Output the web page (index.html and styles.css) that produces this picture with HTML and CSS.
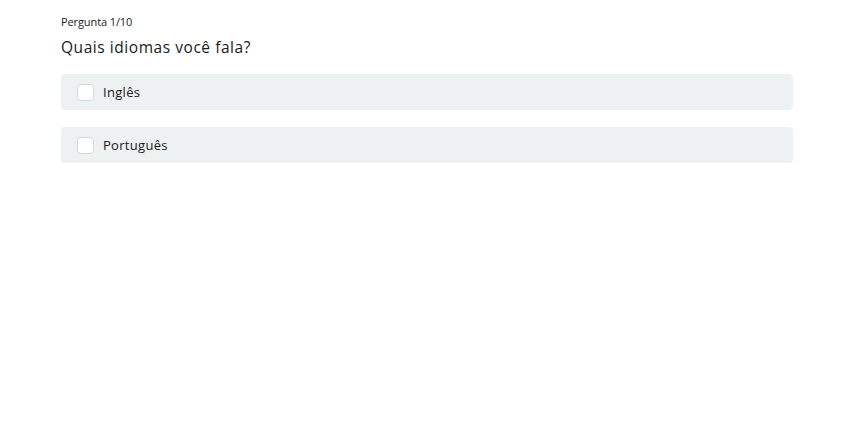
FILE: index.html
```html
<!DOCTYPE html>
<html lang="pt-BR">
<head>
    <meta charset="UTF-8">
    <title>Pergunta 1/10</title>
    <link rel="stylesheet" href="styles.css">
</head>
<body>
<div class="quiz">
    <p class="counter">Pergunta 1/10</p>
    <h2 class="question">Quais idiomas você fala?</h2>

    <label class="option">
        <input type="checkbox" name="idioma" value="en"/>
        <span class="box"></span>
        <span class="text">Inglês</span>
    </label>

    <label class="option">
        <input type="checkbox" name="idioma" value="pt"/>
        <span class="box"></span>
        <span class="text">Português</span>
    </label>
</div>
</body>
</html>
```

FILE: styles.css
```css
:root {
    --bg: #ffffff;
    --text: #1a1a1a;
    --option-bg: #eef1f2;
    --box-border: #d4d8da;
}

* {
    box-sizing: border-box;
}

body {
    margin: 0;
    background-color: var(--bg);
    color: var(--text);
    font-family: 'Open Sans', 'Noto Sans', sans-serif;
}

.quiz {
    width: 732px;
    margin-left: 61px;
    padding-top: 14px;
}

.counter {
    margin: 0;
    font-size: 11px;
    line-height: 16px;
    letter-spacing: -0.1px;
}

.question {
    margin: 6px 0 16px;
    font-size: 15.5px;
    line-height: 22px;
    font-weight: 400;
    letter-spacing: 0.55px;
}

.option {
    display: flex;
    align-items: center;
    height: 36px;
    padding-left: 16px;
    margin-bottom: 17px;
    background-color: var(--option-bg);
    border-radius: 4px;
    cursor: pointer;
}

.option input {
    display: none;
}

.box {
    width: 17px;
    height: 17px;
    background-color: #ffffff;
    border: 1px solid var(--box-border);
    border-radius: 4px;
    margin-right: 9px;
}

.text {
    font-size: 13px;
    letter-spacing: 0.3px;
}
```
